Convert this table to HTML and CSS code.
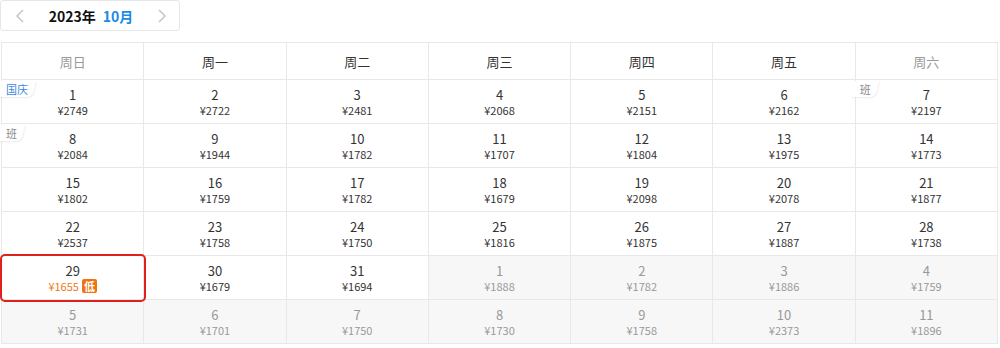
FILE: index.html
```html
<!DOCTYPE html>
<html lang="zh">
<head>
<meta charset="utf-8">
<link rel="stylesheet" href="styles.css">
</head>
<body>
<div class="page">
  <div class="month-nav">
    <span class="arrow">
      <svg width="10" height="16" viewBox="0 0 10 16"><path d="M8 2 L2 8 L8 14" fill="none" stroke="#c8c8c8" stroke-width="1.6"/></svg>
    </span>
    <span class="title"><span class="year">2023年</span><span class="month">10月</span></span>
    <span class="arrow">
      <svg width="10" height="16" viewBox="0 0 10 16"><path d="M2 2 L8 8 L2 14" fill="none" stroke="#c8c8c8" stroke-width="1.6"/></svg>
    </span>
  </div>
  <div class="cal">
    <div class="hd weekend">周日</div>
    <div class="hd">周一</div>
    <div class="hd">周二</div>
    <div class="hd">周三</div>
    <div class="hd">周四</div>
    <div class="hd">周五</div>
    <div class="hd weekend">周六</div>

    <div class="cell"><span class="tag holiday">国庆</span><div class="d">1</div><div class="p">¥2749</div></div>
    <div class="cell"><div class="d">2</div><div class="p">¥2722</div></div>
    <div class="cell"><div class="d">3</div><div class="p">¥2481</div></div>
    <div class="cell"><div class="d">4</div><div class="p">¥2068</div></div>
    <div class="cell"><div class="d">5</div><div class="p">¥2151</div></div>
    <div class="cell"><div class="d">6</div><div class="p">¥2162</div></div>
    <div class="cell"><span class="tag work">班</span><div class="d">7</div><div class="p">¥2197</div></div>

    <div class="cell"><span class="tag work">班</span><div class="d">8</div><div class="p">¥2084</div></div>
    <div class="cell"><div class="d">9</div><div class="p">¥1944</div></div>
    <div class="cell"><div class="d">10</div><div class="p">¥1782</div></div>
    <div class="cell"><div class="d">11</div><div class="p">¥1707</div></div>
    <div class="cell"><div class="d">12</div><div class="p">¥1804</div></div>
    <div class="cell"><div class="d">13</div><div class="p">¥1975</div></div>
    <div class="cell"><div class="d">14</div><div class="p">¥1773</div></div>

    <div class="cell"><div class="d">15</div><div class="p">¥1802</div></div>
    <div class="cell"><div class="d">16</div><div class="p">¥1759</div></div>
    <div class="cell"><div class="d">17</div><div class="p">¥1782</div></div>
    <div class="cell"><div class="d">18</div><div class="p">¥1679</div></div>
    <div class="cell"><div class="d">19</div><div class="p">¥2098</div></div>
    <div class="cell"><div class="d">20</div><div class="p">¥2078</div></div>
    <div class="cell"><div class="d">21</div><div class="p">¥1877</div></div>

    <div class="cell"><div class="d">22</div><div class="p">¥2537</div></div>
    <div class="cell"><div class="d">23</div><div class="p">¥1758</div></div>
    <div class="cell"><div class="d">24</div><div class="p">¥1750</div></div>
    <div class="cell"><div class="d">25</div><div class="p">¥1816</div></div>
    <div class="cell"><div class="d">26</div><div class="p">¥1875</div></div>
    <div class="cell"><div class="d">27</div><div class="p">¥1887</div></div>
    <div class="cell"><div class="d">28</div><div class="p">¥1738</div></div>

    <div class="cell selected"><div class="d">29</div><div class="p low">¥1655<span class="lowtag">低</span></div></div>
    <div class="cell"><div class="d">30</div><div class="p">¥1679</div></div>
    <div class="cell"><div class="d">31</div><div class="p">¥1694</div></div>
    <div class="cell other"><div class="d">1</div><div class="p">¥1888</div></div>
    <div class="cell other"><div class="d">2</div><div class="p">¥1782</div></div>
    <div class="cell other"><div class="d">3</div><div class="p">¥1886</div></div>
    <div class="cell other"><div class="d">4</div><div class="p">¥1759</div></div>

    <div class="cell other"><div class="d">5</div><div class="p">¥1731</div></div>
    <div class="cell other"><div class="d">6</div><div class="p">¥1701</div></div>
    <div class="cell other"><div class="d">7</div><div class="p">¥1750</div></div>
    <div class="cell other"><div class="d">8</div><div class="p">¥1730</div></div>
    <div class="cell other"><div class="d">9</div><div class="p">¥1758</div></div>
    <div class="cell other"><div class="d">10</div><div class="p">¥2373</div></div>
    <div class="cell other"><div class="d">11</div><div class="p">¥1896</div></div>
  </div>
</div>
</body>
</html>
```
FILE: styles.css
```css
* { box-sizing: border-box; }
html, body { margin: 0; padding: 0; background: #fff; }
body {
  font-family: "Noto Sans CJK SC", "Noto Sans", "Liberation Sans", sans-serif;
  color: #333;
  width: 1000px;
  height: 348px;
  overflow: hidden;
}
.page { padding: 0 0 0 1px; }
.month-nav {
  width: 180px;
  height: 31px;
  margin-left: -1px;
  border: 1px solid #e6e6e6;
  border-radius: 3px;
  display: flex;
  align-items: center;
  justify-content: space-between;
  padding: 0 12px 0 14px;
  margin-bottom: 11px;
}
.arrow { display: flex; align-items: center; }
.title { font-size: 14px; font-weight: bold; color: #111; display: flex; gap: 7px; }
.month { color: #1a8be6; }
.cal {
  width: 997px;
  display: grid;
  grid-template-columns: repeat(7, 1fr);
  grid-template-rows: 37px repeat(6, 44px);
  border-top: 1px solid #e8e8e8;
  border-left: 1px solid #e8e8e8;
}
.hd, .cell {
  border-right: 1px solid #e8e8e8;
  border-bottom: 1px solid #e8e8e8;
}
.hd {
  display: flex;
  align-items: center;
  justify-content: center;
  font-size: 13px;
  color: #333;
}
.hd.weekend { color: #999; }
.cell {
  position: relative;
  display: flex;
  flex-direction: column;
  align-items: center;
  justify-content: center;
  padding-top: 1px;
}
.d { font-size: 13px; line-height: 16px; color: #333; }
.p { font-size: 11px; line-height: 15px; color: #333; display: flex; align-items: center; }
.cell.other { background: #f7f7f7; }
.cell.other .d, .cell.other .p { color: #999; }
.cell.selected {
  outline: 2px solid #e0201d;
  outline-offset: 0;
  border-radius: 3px;
  z-index: 1;
}
.p.low { color: #f27712; }
.lowtag {
  display: inline-block;
  background: #f07312;
  color: #fff;
  font-size: 11px;
  line-height: 14px;
  padding: 0 2px;
  margin-left: 3px;
  border-radius: 2px;
  font-weight: bold;
}
.tag {
  position: absolute;
  top: 1px;
  left: 1px;
  font-size: 11px;
  line-height: 16px;
  padding: 0 8px 0 3px;
  z-index: 0;
}
.tag::before {
  content: "";
  position: absolute;
  inset: 0 2px 0 -4px;
  background: #fff;
  transform: skewX(-14deg);
  border-radius: 0 0 5px 0;
  box-shadow: 1px 1px 2px rgba(0,0,0,0.08);
  z-index: -1;
}
.tag.holiday { color: #3d86e0; }
.tag.work { color: #888; }
```
